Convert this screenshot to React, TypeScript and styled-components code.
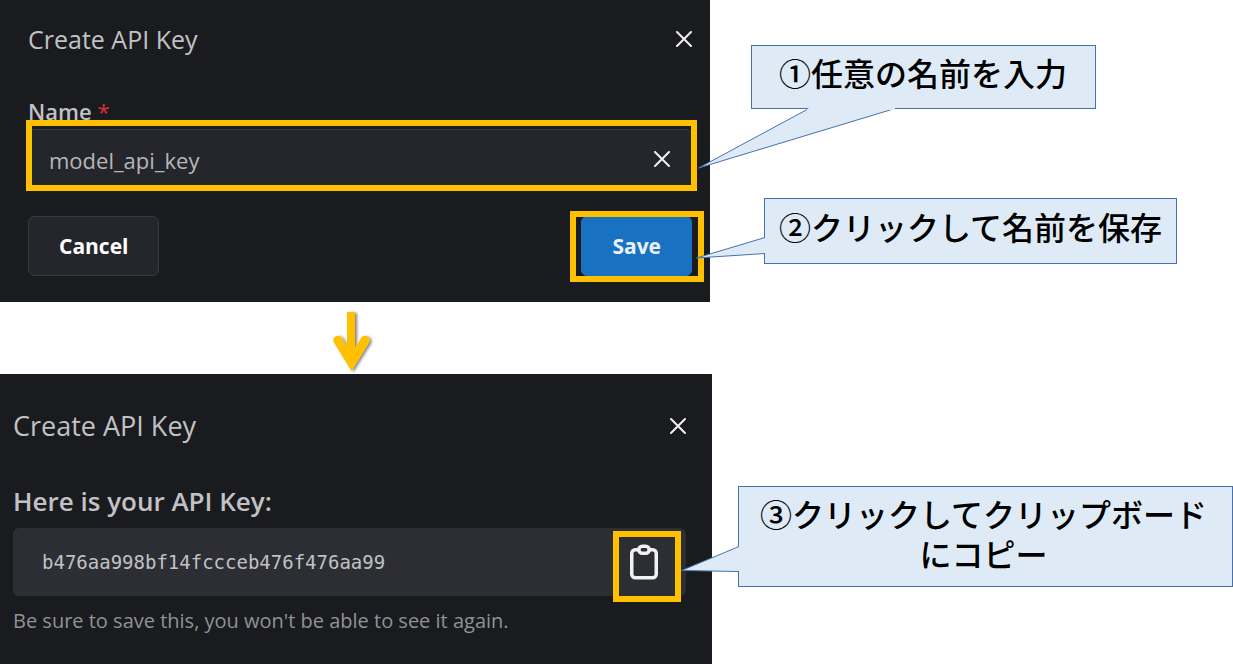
import React from "react";
import styled, { createGlobalStyle, css } from "styled-components";

const latin = `"Open Sans", "Noto Sans", sans-serif`;

const GlobalStyle = createGlobalStyle`
  *, *::before, *::after { box-sizing: border-box; }
  body { margin: 0; background: #fff; font-family: ${latin}; }
  h2, h3, p { margin: 0; }
  button, input { font: inherit; }
`;

const Page = styled.main`
  display: flex;
  flex-direction: column;
  min-height: 100vh;
  overflow-x: hidden;
`;

const Step = styled.section<{ $dialog: number; $notes: number; $grow?: boolean }>`
  display: grid;
  grid-template-columns: minmax(0, ${(p) => p.$dialog}fr) minmax(0, ${(p) => p.$notes}fr);
  flex: ${(p) => (p.$grow ? "1 0 auto" : "0 0 auto")};
`;

const Dialog = styled.div<{ $pad: string }>`
  background: #1a1b1e;
  color: #c1c2c5;
  padding: ${(p) => p.$pad};
`;

const Header = styled.header<{ $gap: number }>`
  display: flex;
  align-items: center;
  justify-content: space-between;
  margin-bottom: ${(p) => p.$gap}px;
`;

const Title = styled.h2<{ $size: number }>`
  font-size: ${(p) => p.$size}px;
  line-height: 32px;
  font-weight: 400;
`;

const IconButton = styled.button`
  display: grid;
  place-items: center;
  flex: none;
  padding: 0;
  border: 0;
  background: none;
  color: #f1f1f2;
  cursor: pointer;
`;

const NameLabel = styled.label`
  display: block;
  font-size: 22px;
  line-height: 32px;
  font-weight: 600;
  margin-bottom: 2px;
`;

const Required = styled.span`
  color: #d92f2f;
  font-weight: 400;
`;

const Field = styled.div`
  position: relative;
  display: flex;
  align-items: center;
  height: 60px;
  padding: 0 21px 0 20px;
  background: #25262b;
  border: 1px solid #373a40;
  border-radius: 6px;
`;

const NameInput = styled.input`
  flex: 1;
  min-width: 0;
  padding: 2px 0 0;
  border: 0;
  outline: 0;
  background: none;
  color: #b6b7ba;
  font-size: 22px;
  line-height: 32px;
`;

const Highlight = styled.span<{ $inset: string }>`
  position: absolute;
  inset: ${(p) => p.$inset};
  border: 6px solid #ffc000;
  pointer-events: none;
`;

const Actions = styled.div`
  display: flex;
  justify-content: space-between;
  margin-top: 27px;
`;

const ActionSlot = styled.div`
  position: relative;
`;

const ActionButton = styled.button<{ $primary?: boolean }>`
  display: block;
  height: 60px;
  padding: 0 30px;
  border-radius: 6px;
  font-size: 21px;
  font-weight: 700;
  cursor: pointer;
  ${(p) =>
    p.$primary
      ? css`
          background: #1971c2;
          border: 1px solid #1971c2;
          color: #e8f2fb;
        `
      : css`
          background: #25262b;
          border: 1px solid #373a40;
          color: #fff;
        `}
`;

const ArrowRow = styled.div`
  display: flex;
  height: 72px;
  padding: 8px 0 0 27%;
`;

const KeyHeading = styled.h3`
  font-size: 26px;
  line-height: 32px;
  font-weight: 600;
  margin-bottom: 11px;
`;

const KeyBox = styled.div`
  display: flex;
  align-items: center;
  justify-content: space-between;
  height: 68px;
  padding: 0 11px 0 29px;
  background: #2c2e33;
  border-radius: 6px;
`;

const KeyText = styled.code`
  font-family: "DejaVu Sans Mono", monospace;
  font-size: 19px;
  line-height: 28px;
`;

const CopySlot = styled.div`
  position: relative;
  display: flex;
`;

const CopyButton = styled(IconButton)`
  width: 62px;
  height: 60px;
`;

const Hint = styled.p`
  margin-top: 11px;
  color: #909296;
  font-size: 20px;
  line-height: 28px;
`;

const Notes = styled.div<{ $pad: string }>`
  position: relative;
  z-index: 1;
  display: flex;
  flex-direction: column;
  align-items: flex-start;
  padding: ${(p) => p.$pad};
`;

const Callout = styled.div<{ $pad: string; $margin?: string; $fill?: boolean }>`
  position: relative;
  padding: ${(p) => p.$pad};
  margin: ${(p) => p.$margin ?? "0"};
  width: ${(p) => (p.$fill ? "100%" : "auto")};
  background: #deebf7;
  border: 1px solid #4472b0;
  color: #000;
  font-family: "Noto Sans CJK JP", sans-serif;
  font-size: 32px;
  line-height: 40px;
  font-weight: 500;
  text-align: center;
`;

const Tail = styled.svg<{ $left: number; $top: number }>`
  position: absolute;
  left: ${(p) => p.$left}px;
  top: ${(p) => p.$top}px;
  overflow: visible;
  fill: #deebf7;
  pointer-events: none;

  polyline {
    stroke: #4472b0;
    stroke-width: 1;
  }
`;

const CloseIcon = () => (
  <svg width="16" height="16" viewBox="0 0 16 16" fill="none" stroke="currentColor" strokeWidth="2" strokeLinecap="round" aria-hidden="true">
    <path d="M1 1 15 15M15 1 1 15" />
  </svg>
);

const ClipboardIcon = () => (
  <svg width="42" height="42" viewBox="0 0 24 24" fill="none" stroke="currentColor" strokeWidth="2" strokeLinecap="round" strokeLinejoin="round" aria-hidden="true">
    <path d="M9 5H7a2 2 0 0 0-2 2v12a2 2 0 0 0 2 2h10a2 2 0 0 0 2-2V7a2 2 0 0 0-2-2h-2" />
    <path d="M9 5a2 2 0 0 1 2-2h2a2 2 0 0 1 2 2 2 2 0 0 1-2 2h-2a2 2 0 0 1-2-2z" />
  </svg>
);

const DownArrow = () => (
  <svg width="44" height="64" viewBox="0 0 44 64" overflow="visible" aria-hidden="true">
    <defs>
      <filter id="arrowShadow" x="-20%" y="-20%" width="150%" height="150%">
        <feDropShadow dx="2" dy="1" stdDeviation="1.5" floodColor="#000" floodOpacity="0.5" />
      </filter>
    </defs>
    <path
      filter="url(#arrowShadow)"
      fill="#ffc000"
      d="M14 2h8v36l6-10c3-5 11-1 8 4.500L18.500 61 1 32.500c-3-5.500 5-9.500 8-4.500l5 9z"
    />
  </svg>
);

export default function App() {
  return (
    <>
      <GlobalStyle />
      <Page>
        <Step $dialog={710} $notes={523}>
          <Dialog $pad="23px 18px 26px 28px">
            <Header $gap={40}>
              <Title $size={25}>Create API Key</Title>
              <IconButton type="button" aria-label="Close">
                <CloseIcon />
              </IconButton>
            </Header>
            <NameLabel htmlFor="key-name">
              Name <Required>*</Required>
            </NameLabel>
            <Field>
              <NameInput id="key-name" type="text" defaultValue="model_api_key" />
              <IconButton type="button" aria-label="Clear name">
                <CloseIcon />
              </IconButton>
              <Highlight $inset="-10px -6px -3px -3px" />
            </Field>
            <Actions>
              <ActionButton type="button">Cancel</ActionButton>
              <ActionSlot>
                <ActionButton type="button" $primary>
                  Save
                </ActionButton>
                <Highlight $inset="-5px -12px -6px -11px" />
              </ActionSlot>
            </Actions>
          </Dialog>
          <Notes $pad="45px 0 0 41px">
            <Callout $pad="6px 28px 16px 27px">
              ①任意の名前を入力
              <Tail $left={-54} $top={62} width="200" height="62" aria-hidden="true">
                <polyline points="111,0.5 0.5,60 197,0.5" />
                <path d="M111 0H197V2H108z" />
              </Tail>
            </Callout>
            <Callout $pad="7px 14px 17px" $margin="89px 0 0 13px">
              ②クリックして名前を保存
              <Tail $left={-69} $top={38} width="70" height="24" aria-hidden="true">
                <polyline points="69,0.5 0.5,21 69,16.5" />
              </Tail>
            </Callout>
          </Notes>
        </Step>

        <ArrowRow>
          <DownArrow />
        </ArrowRow>

        <Step $dialog={712} $notes={521} $grow>
          <Dialog $pad="36px 26px 29px 13px">
            <Header $gap={43}>
              <Title $size={27}>Create API Key</Title>
              <IconButton type="button" aria-label="Close">
                <CloseIcon />
              </IconButton>
            </Header>
            <KeyHeading>Here is your API Key:</KeyHeading>
            <KeyBox>
              <KeyText>b476aa998bf14fccceb476f476aa99</KeyText>
              <CopySlot>
                <CopyButton type="button" aria-label="Copy to clipboard">
                  <ClipboardIcon />
                </CopyButton>
                <Highlight $inset="-1px -6px -10px 0" />
              </CopySlot>
            </KeyBox>
            <Hint>Be sure to save this, you won't be able to see it again.</Hint>
          </Dialog>
          <Notes $pad="112px 0 0 26px">
            <Callout $pad="6px 22px 13px 18px" $fill>
              ③クリックしてクリップボード
              <br />
              にコピー
              <Tail $left={-58} $top={59} width="58" height="26" aria-hidden="true">
                <polyline points="58,0.5 0.5,24.5 58,25.5" />
              </Tail>
            </Callout>
          </Notes>
        </Step>
      </Page>
    </>
  );
}
